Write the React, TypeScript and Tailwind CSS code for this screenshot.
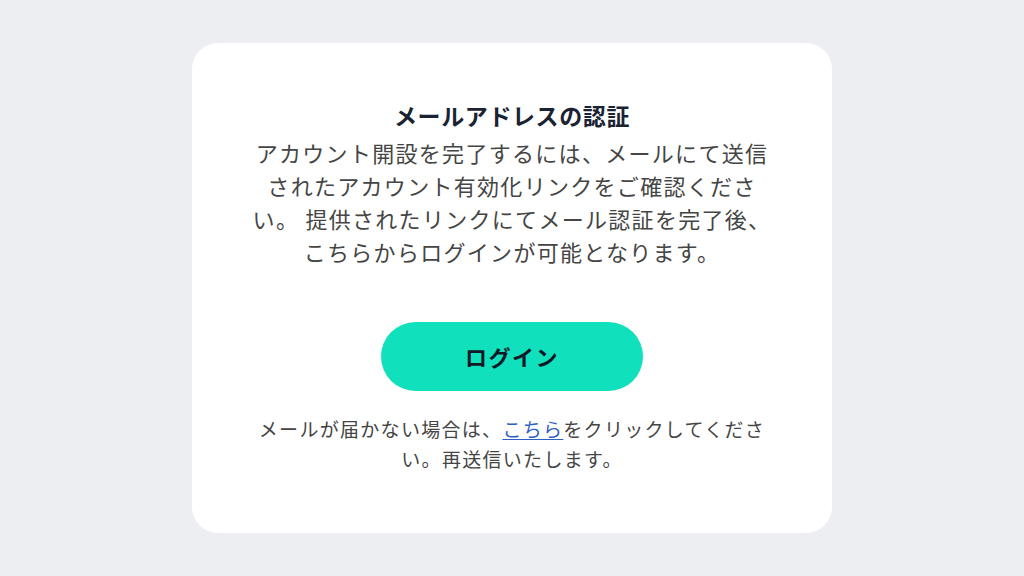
const bodyLines = [
  "アカウント開設を完了するには、メールにて送信",
  "されたアカウント有効化リンクをご確認くださ",
  "い。 提供されたリンクにてメール認証を完了後、",
  "こちらからログインが可能となります。",
];

export default function App() {
  return (
    <div
      className="flex h-screen w-full items-center justify-center bg-[#edeef2]"
      style={{ fontFamily: '"Noto Sans CJK JP", "Noto Sans", sans-serif' }}
    >
      <div className="flex h-[490px] w-[640px] flex-col items-center rounded-[26px] bg-white pt-[54px]">
        <h1 className="text-center text-[23px] leading-[36px] font-bold tracking-[0.6px] text-[#1a2333]">
          メールアドレスの認証
        </h1>
        <div className="mt-[3px] text-center text-[22px] leading-[33px] tracking-[1.3px] text-[#454545]">
          {bodyLines.map((line) => (
            <p key={line} className="whitespace-pre">
              {line}
            </p>
          ))}
        </div>
        <button className="mt-[54px] h-[69px] w-[262px] rounded-full bg-[#10e0bc] text-[22px] font-bold tracking-[1.5px] text-[#111827]">
          ログイン
        </button>
        <div className="mt-[23px] text-center text-[19px] leading-[30px] tracking-[1.3px] text-[#454545]">
          <p className="whitespace-pre">
            メールが届かない場合は、
            <a href="#" className="text-[#2f5fc4] underline underline-offset-2">
              こちら
            </a>
            をクリックしてくださ
          </p>
          <p>い。再送信いたします。</p>
        </div>
      </div>
    </div>
  );
}
